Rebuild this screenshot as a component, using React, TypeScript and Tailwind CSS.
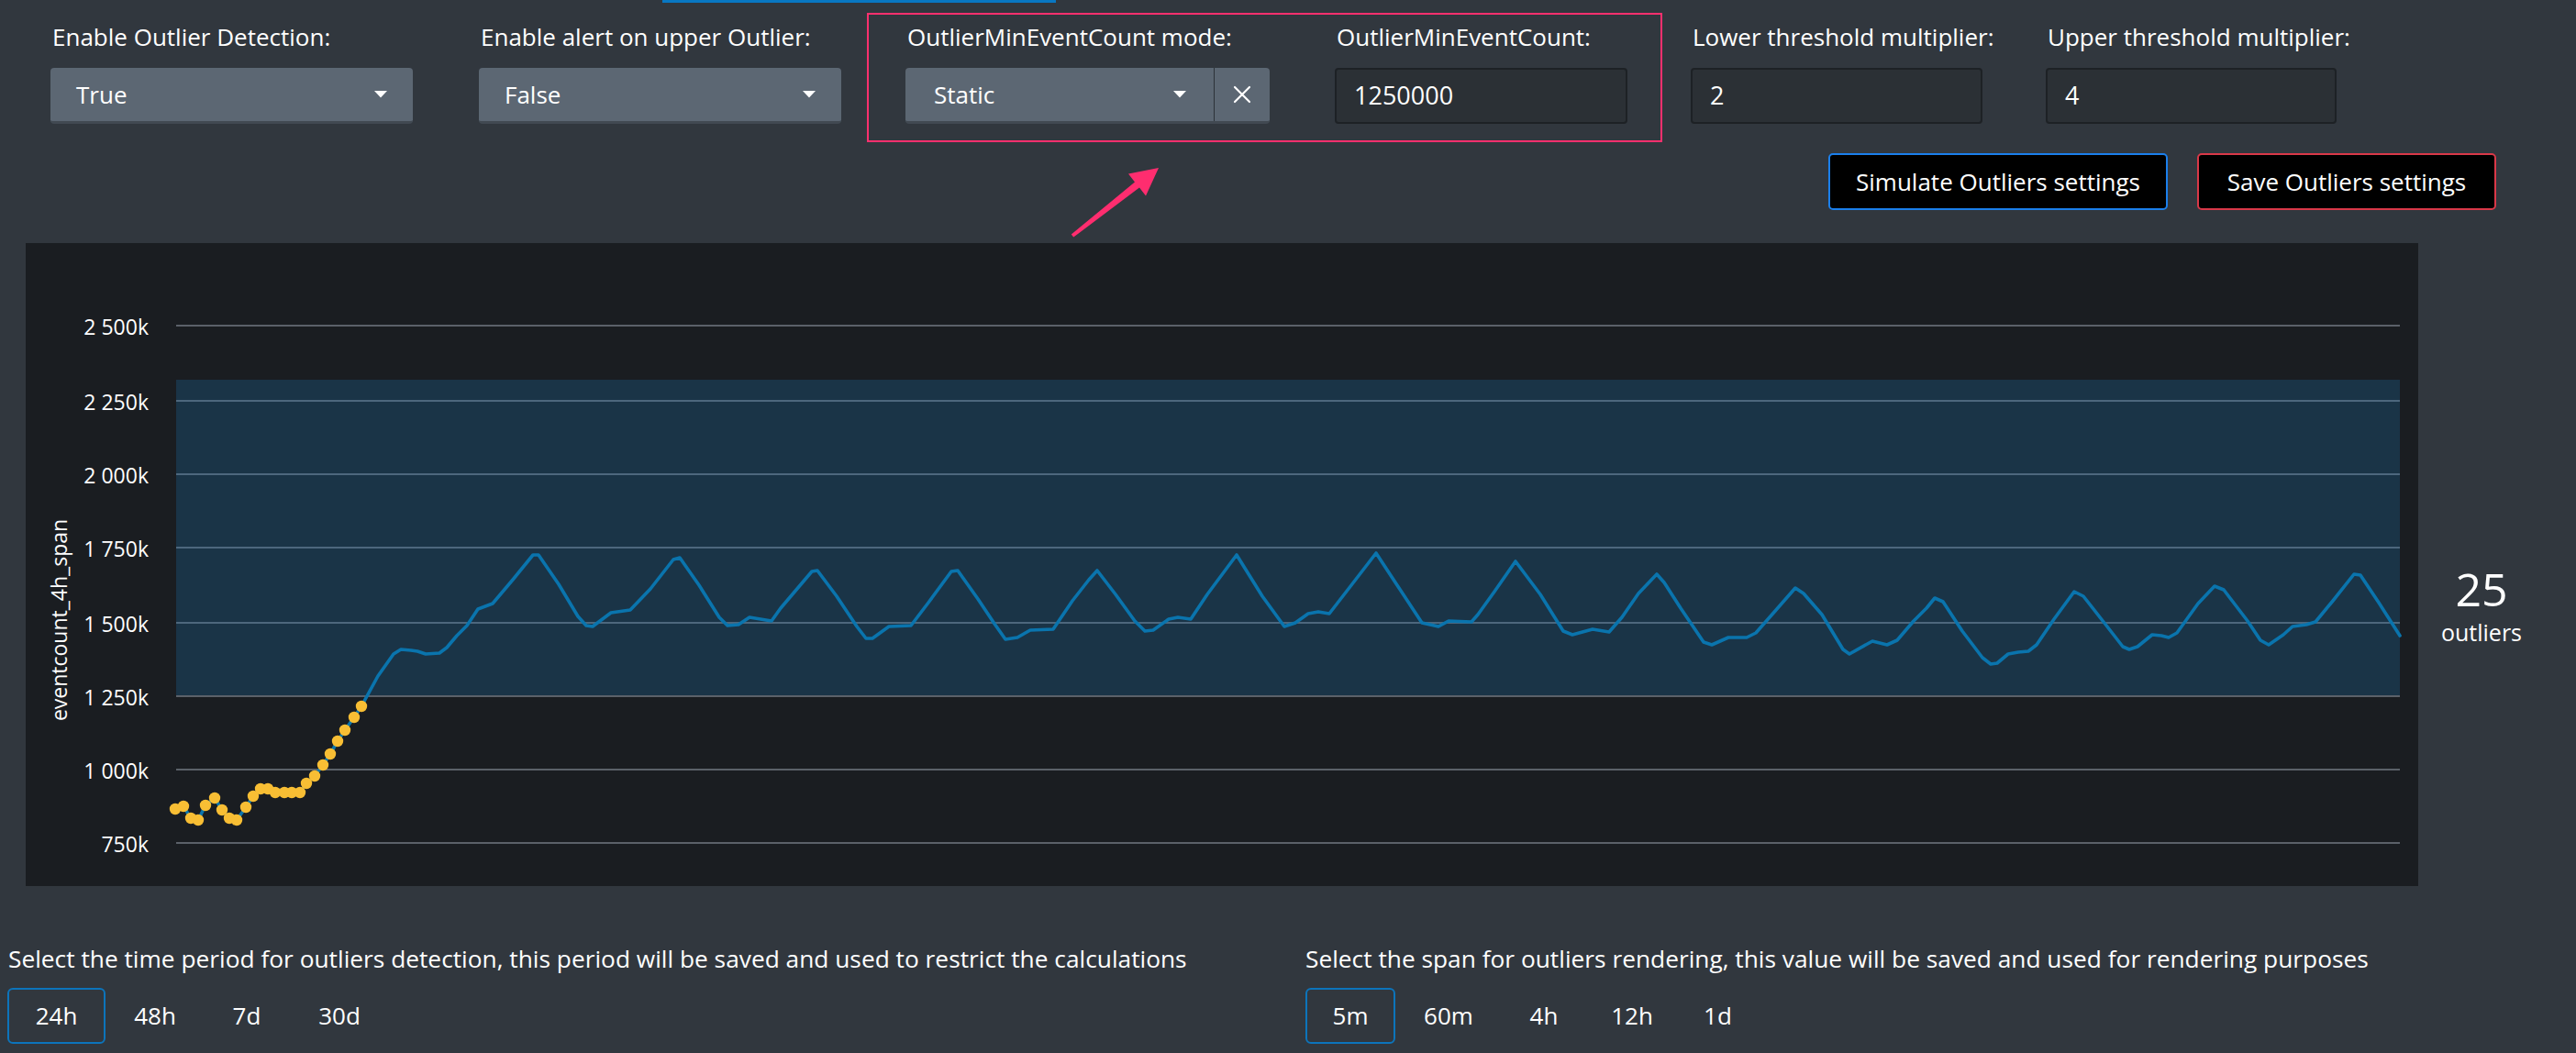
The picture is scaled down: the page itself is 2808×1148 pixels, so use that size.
import React from "react";

const dots: [number, number][] = [
  [191, 882], [200, 879], [208, 892], [216, 894], [224, 878], [234, 870], [242, 883], [250, 892], [258, 894],
  [268, 880], [276, 868], [284, 860], [292, 860], [300, 864], [310, 864], [318, 864], [327, 864], [334, 854],
  [343, 846], [352, 834], [360, 822], [368, 808], [376, 796], [386, 782], [394, 770],
];

const rest: [number, number][] = [
  [412, 737], [429, 713], [437, 708], [448, 709], [455, 710], [464, 713], [479, 712], [487, 706], [498, 693],
  [509, 682], [521, 664], [537, 658], [559, 632], [581, 605], [587, 605], [609, 637], [630, 672], [639, 682],
  [646, 683], [666, 668], [687, 665], [709, 642], [734, 610], [741, 608], [762, 638], [784, 673], [793, 682],
  [805, 681], [817, 673], [841, 677], [851, 663], [885, 623], [891, 622], [912, 650], [934, 683], [944, 696],
  [951, 696], [969, 683], [993, 682], [1012, 657], [1037, 623], [1044, 622], [1066, 653], [1084, 680],
  [1096, 697], [1109, 695], [1123, 687], [1148, 686], [1169, 655], [1187, 632], [1196, 622], [1216, 648],
  [1237, 677], [1248, 688], [1257, 687], [1274, 675], [1284, 673], [1298, 675], [1316, 648], [1348, 605],
  [1376, 650], [1400, 683], [1412, 679], [1426, 669], [1437, 667], [1449, 669], [1473, 638], [1500, 603],
  [1521, 635], [1550, 679], [1568, 683], [1579, 677], [1604, 678], [1611, 670], [1629, 645], [1652, 612],
  [1679, 648], [1704, 688], [1714, 692], [1736, 686], [1754, 689], [1768, 673], [1786, 647], [1806, 626],
  [1814, 635], [1832, 663], [1857, 700], [1866, 703], [1884, 695], [1904, 695], [1914, 690], [1936, 665],
  [1957, 641], [1966, 647], [1986, 670], [2009, 708], [2016, 713], [2041, 699], [2057, 703], [2068, 698],
  [2086, 677], [2100, 663], [2109, 652], [2118, 656], [2139, 688], [2161, 717], [2170, 724], [2177, 723],
  [2189, 713], [2200, 711], [2211, 710], [2220, 703], [2239, 675], [2261, 645], [2271, 650], [2293, 678],
  [2314, 705], [2321, 708], [2330, 705], [2346, 692], [2356, 693], [2364, 695], [2373, 690], [2396, 658],
  [2414, 639], [2424, 643], [2450, 677], [2464, 698], [2473, 703], [2489, 692], [2499, 683], [2514, 681],
  [2524, 678], [2543, 655], [2566, 626], [2573, 627], [2593, 657], [2616, 693],
];

const ticks: { label: string; y: number; inBand: boolean }[] = [
  { label: "2 500k", y: 355, inBand: false },
  { label: "2 250k", y: 437, inBand: true },
  { label: "2 000k", y: 517, inBand: true },
  { label: "1 750k", y: 597, inBand: true },
  { label: "1 500k", y: 679, inBand: true },
  { label: "1 250k", y: 759, inBand: false },
  { label: "1 000k", y: 839, inBand: false },
  { label: "750k", y: 919, inBand: false },
];

function Caret() {
  return (
    <svg width="14" height="8" viewBox="0 0 14 8">
      <path d="M0 0 L14 0 L7 7.5 Z" fill="#ffffff" />
    </svg>
  );
}

function Select({ value }: { value: string }) {
  return (
    <div className="mt-[18px] h-[61px] rounded-[4px] bg-[#5c6773] border-b-[3px] border-[#414952] flex items-center justify-between pl-[28px] pr-[28px] text-[26px]">
      <span>{value}</span>
      <Caret />
    </div>
  );
}

function SelectClear({ value }: { value: string }) {
  return (
    <div className="mt-[18px] h-[61px] rounded-[4px] bg-[#5c6773] border-b-[3px] border-[#414952] flex text-[26px]">
      <div className="flex-1 flex items-center justify-between pl-[31px] pr-[30px]">
        <span>{value}</span>
        <Caret />
      </div>
      <div className="w-[61px] border-l border-[#2c3238] flex items-center justify-center">
        <svg width="20" height="20" viewBox="0 0 20 20">
          <path d="M2 2 L18 18 M18 2 L2 18" stroke="#ffffff" strokeWidth="2.2" strokeLinecap="round" />
        </svg>
      </div>
    </div>
  );
}

function TextInput({ value }: { value: string }) {
  return (
    <div className="mt-[18px] h-[61px] rounded-[4px] bg-[#2b3035] border-2 border-[#1d2125] flex items-center pl-[19px] text-[27px]">
      {value}
    </div>
  );
}

function Label({ text }: { text: string }) {
  return <div className="text-[26px] leading-[32px] whitespace-nowrap pl-[2px]">{text}</div>;
}

function Segmented({ items, active }: { items: { label: string; w: string }[]; active: string }) {
  return (
    <div className="flex mt-[16px]">
      {items.map((it) => (
        <div
          key={it.label}
          className={
            (it.label === active
              ? "border-[#0c74bb] rounded-[6px] "
              : "border-transparent ") +
            it.w +
            " h-[61px] flex items-center justify-center border-2 text-[26px] shrink-0"
          }
        >
          {it.label}
        </div>
      ))}
    </div>
  );
}

function Chart() {
  const all = [...dots, ...rest];
  const pts = all.map((p) => `${p[0]},${p[1]}`).join(" ");
  return (
    <svg width="2608" height="701" viewBox="28 265 2608 701" className="block">
      <rect x="28" y="265" width="2608" height="701" fill="#1a1d21" />
      <rect x="192" y="414" width="2424" height="345" fill="#1a3447" />
      {ticks.map((t) => (
        <g key={t.label}>
          <line x1="192" x2="2616" y1={t.y} y2={t.y} stroke={t.inBand ? "#4d677d" : "#5b6169"} strokeWidth="2" />
          <text x="162" y={t.y + 9.5} textAnchor="end" fontSize="23" fill="#ffffff" fontFamily="Open Sans">
            {t.label}
          </text>
        </g>
      ))}
      <text
        transform="translate(73,676) rotate(-90)"
        textAnchor="middle"
        fontSize="23"
        fill="#ffffff"
        fontFamily="Open Sans"
      >
        eventcount_4h_span
      </text>
      <polyline points={pts} fill="none" stroke="#0a74ad" strokeWidth="3.6" strokeLinejoin="round" strokeLinecap="round" />
      {dots.map((d, i) => (
        <circle key={i} cx={d[0]} cy={d[1]} r="6.2" fill="#f8be34" />
      ))}
    </svg>
  );
}

export default function App() {
  return (
    <div className="w-[2808px] h-[1148px] bg-[#31373e] text-white font-['Open_Sans',sans-serif] relative overflow-hidden">
      <div className="h-[3px] ml-[722px] w-[429px] bg-[#0877c2]" />

      <div className="flex items-start pt-[11px]">
        <div className="ml-[55px] w-[395px] pt-[10px]">
          <Label text="Enable Outlier Detection:" />
          <Select value="True" />
        </div>
        <div className="ml-[72px] w-[395px] pt-[10px]">
          <Label text="Enable alert on upper Outlier:" />
          <Select value="False" />
        </div>
        <div className="ml-[28px] w-[867px] border-2 border-[#ff306e] pt-[8px] pb-[18px] pl-[40px] flex">
          <div className="w-[397px]">
            <Label text="OutlierMinEventCount mode:" />
            <SelectClear value="Static" />
          </div>
          <div className="ml-[71px] w-[319px]">
            <Label text="OutlierMinEventCount:" />
            <TextInput value="1250000" />
          </div>
        </div>
        <div className="ml-[31px] w-[318px] pt-[10px]">
          <Label text="Lower threshold multiplier:" />
          <TextInput value="2" />
        </div>
        <div className="ml-[69px] w-[317px] pt-[10px]">
          <Label text="Upper threshold multiplier:" />
          <TextInput value="4" />
        </div>
      </div>

      <div className="flex justify-end gap-[32px] pr-[87px] mt-[12px]">
        <button className="w-[370px] h-[62px] bg-black border-2 border-[#1b7feb] rounded-[5px] text-[26px] text-white">
          Simulate Outliers settings
        </button>
        <button className="w-[326px] h-[62px] bg-black border-2 border-[#d93848] rounded-[5px] text-[26px] text-white">
          Save Outliers settings
        </button>
      </div>

      <div className="flex mt-[36px]">
        <div className="ml-[28px] w-[2608px] h-[701px]">
          <Chart />
        </div>
        <div className="w-[138px] mt-[352px] flex flex-col items-center">
          <div className="text-[50px] leading-[50px]">25</div>
          <div className="text-[25px] leading-[25px] mt-[10px]">outliers</div>
        </div>
      </div>

      <div className="flex mt-[63px]">
        <div className="w-[1423px] pl-[8px]">
          <div className="text-[26.3px] leading-[32px] whitespace-nowrap pl-[1px]">
            Select the time period for outliers detection, this period will be saved and used to restrict the calculations
          </div>
          <Segmented
            items={[
              { label: "24h", w: "w-[107px]" },
              { label: "48h", w: "w-[108px]" },
              { label: "7d", w: "w-[92px]" },
              { label: "30d", w: "w-[110px]" },
            ]}
            active="24h"
          />
        </div>
        <div>
          <div className="text-[26.3px] leading-[32px] whitespace-nowrap">
            Select the span for outliers rendering, this value will be saved and used for rendering purposes
          </div>
          <Segmented
            items={[
              { label: "5m", w: "w-[98px]" },
              { label: "60m", w: "w-[116px]" },
              { label: "4h", w: "w-[92px]" },
              { label: "12h", w: "w-[100px]" },
              { label: "1d", w: "w-[87px]" },
            ]}
            active="5m"
          />
        </div>
      </div>

      <svg className="absolute left-0 top-0 pointer-events-none" width="2808" height="300" viewBox="0 0 2808 300">
        <polygon
          points="1170.2,258.6 1242,204.6 1249,213.5 1263,183 1230,189.5 1237,198.4 1167.8,255.4"
          fill="#ff2d6f"
        />
      </svg>
    </div>
  );
}
